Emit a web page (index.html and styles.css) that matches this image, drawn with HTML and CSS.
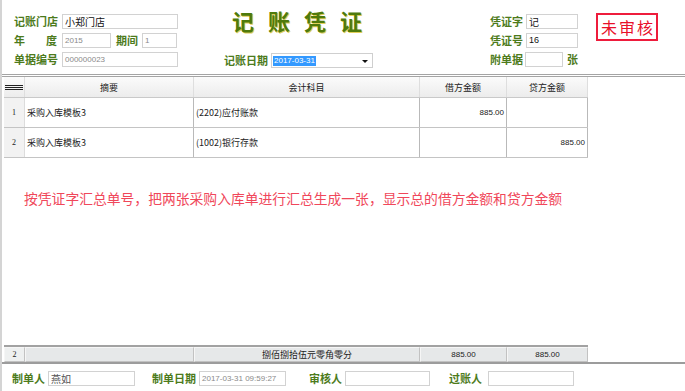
FILE: index.html
```html
<!DOCTYPE html>
<html lang="zh">
<head>
<meta charset="UTF-8">
<title>记账凭证</title>
<link rel="stylesheet" href="styles.css">
</head>
<body>
<div class="page">

<div class="head">
<div class="col-left">
<div class="row"><span class="lbl">记账门店</span><span class="field w116 dark">小郑门店</span></div>
<div class="row"><span class="lbl spread">年度</span><span class="field w49 num">2015</span><span class="lbl ml5">期间</span><span class="field w35 num">1</span></div>
<div class="row"><span class="lbl">单据编号</span><span class="field w116 num">000000023</span></div>
</div>

<div class="col-mid">
<div class="title">记账凭证</div>
<div class="row"><span class="lbl">记账日期</span><span class="select"><span class="sel-text">2017-03-31</span><span class="arrow"></span></span></div>
</div>

<div class="col-right">
<div class="row"><span class="lbl">凭证字</span><span class="field w52 dark">记</span></div>
<div class="row"><span class="lbl">凭证号</span><span class="field w52 dark num">16</span></div>
<div class="row"><span class="lbl">附单据</span><span class="field w39"></span><span class="lbl unit">张</span></div>
</div>

<div class="stamp">未审核</div>
</div>

<div class="grid">
<div class="grid-row grid-head">
<div class="cell"><svg width="18" height="5" viewBox="0 0 18 5"><rect x="0" y="0" width="18" height="1" fill="#222"/><rect x="0" y="2" width="18" height="1" fill="#222"/><rect x="0" y="4" width="18" height="1" fill="#222"/></svg></div>
<div class="cell">摘要</div>
<div class="cell">会计科目</div>
<div class="cell">借方金额</div>
<div class="cell">贷方金额</div>
</div>
<div class="grid-row grid-line">
<div class="cell no">1</div>
<div class="cell txt">采购入库模板3</div>
<div class="cell txt">(2202)应付账款</div>
<div class="cell amt">885.00</div>
<div class="cell amt"></div>
</div>
<div class="grid-row grid-line">
<div class="cell no">2</div>
<div class="cell txt">采购入库模板3</div>
<div class="cell txt">(1002)银行存款</div>
<div class="cell amt"></div>
<div class="cell amt">885.00</div>
</div>

<div class="note">按凭证字汇总单号，把两张采购入库单进行汇总生成一张，显示总的借方金额和贷方金额</div>

<div class="sum-wrap">
<div class="grid-row grid-sum">
<div class="cell">2</div>
<div class="cell"></div>
<div class="cell">捌佰捌拾伍元零角零分</div>
<div class="cell">885.00</div>
<div class="cell">885.00</div>
</div>
</div>
</div>

<div class="foot">
<span class="lbl">制单人</span><span class="field w87 gray">燕如</span>
<span class="lbl gap17">制单日期</span><span class="field w87 num">2017-03-31 09:59:27</span>
<span class="lbl gap23">审核人</span><span class="field w85"></span>
<span class="lbl gap19">过账人</span><span class="field w86"></span>
</div>

</div>
</body>
</html>
```
FILE: styles.css
```css
* {
margin: 0;
padding: 0;
box-sizing: border-box;
}
body {
font-family: "Noto Sans CJK SC", "Liberation Sans", sans-serif;
background: #fff;
width: 685px;
height: 391px;
overflow: hidden;
}
.page {
border-left: 2px solid #d4d4d4;
height: 391px;
}

/* top form */
.head {
display: flex;
height: 74px;
padding: 12px 0 0 12px;
}
.row {
display: flex;
align-items: center;
height: 19px;
}
.lbl {
font-size: 11px;
font-weight: bold;
color: #4d7b1c;
line-height: 15px;
white-space: nowrap;
}
.col-left .lbl {
width: 48px;
}
.col-left .lbl.ml5 {
width: 26px;
margin-left: 5px;
}
.spread {
text-align: justify;
text-align-last: justify;
padding-right: 5px;
}
.field {
display: inline-block;
height: 15px;
border: 1px solid #d2d2d2;
background: #fff;
font-size: 9px;
line-height: 13px;
padding-left: 2px;
color: #8a8a8a;
white-space: nowrap;
overflow: hidden;
}
.field.dark {
color: #111;
font-size: 10px;
}
.field.gray {
color: #555;
font-size: 10px;
}
.num {
font-family: "Liberation Sans", sans-serif;
font-size: 8px;
}
.field.dark.num {
font-size: 9px;
}
.w116 { width: 116px; }
.w49 { width: 49px; }
.w35 { width: 35px; }
.w52 { width: 52px; }
.w39 { width: 39px; }
.w87 { width: 87px; }
.w85 { width: 85px; }
.w86 { width: 86px; }

.col-left {
width: 167px;
flex: none;
}
.col-mid {
margin-left: 43px;
width: 149px;
flex: none;
margin-top: -4px;
}
.title {
height: 43px;
line-height: 24px;
padding-left: 8px;
font-size: 22px;
font-weight: bold;
letter-spacing: 14px;
white-space: nowrap;
color: #4f7a0c;
text-shadow: 1px 1px 0 #e2cf5a;
}
.col-mid .row .lbl {
width: 47px;
}
.select {
position: relative;
display: flex;
align-items: center;
width: 102px;
height: 15px;
border: 1px solid #cfcfcf;
padding-left: 1px;
}
.sel-text {
background: #3399ff;
color: #fff;
font-family: "Liberation Sans", sans-serif;
font-size: 8px;
line-height: 10px;
padding: 0 1px;
}
.arrow {
position: absolute;
right: 4px;
top: 6px;
border-left: 3px solid transparent;
border-right: 3px solid transparent;
border-top: 3px solid #111;
}
.col-right {
margin-left: 117px;
width: 88px;
flex: none;
}
.col-right .lbl {
width: 36px;
}
.col-right .lbl.unit {
width: auto;
margin-left: 4px;
}
.stamp {
flex: none;
margin: 1px 0 0 18px;
width: 62px;
height: 28px;
border: 2px solid #ee1c3c;
color: #e8102a;
font-size: 16px;
line-height: 24px;
text-align: center;
letter-spacing: 2px;
padding-left: 2px;
}

/* grid */
.grid {
border-top: 3px double #a4a4a4;
}
.grid-row {
display: grid;
grid-template-columns: 21px 169px 226px 87px 81px;
width: 584px;
margin-left: 2px;
}
.cell {
font-size: 9px;
color: #222;
white-space: nowrap;
overflow: hidden;
}
.grid-head {
height: 21px;
background: linear-gradient(#fbfbfb, #ececec);
border-bottom: 1px solid #c9c9c9;
}
.grid-head .cell {
display: flex;
align-items: center;
justify-content: center;
border-right: 1px solid #dedede;
}
.grid-line {
height: 30px;
border-bottom: 1px solid #c4c4c4;
}
.grid-line .cell {
display: flex;
align-items: center;
border-right: 1px solid #b9b9b9;
}
.grid-line .no {
justify-content: center;
background: #f2f2f2;
border-right: 1px solid #dcdcdc;
font-family: "Liberation Serif", serif;
font-size: 8px;
}
.grid-line .txt {
padding-left: 2px;
}
.grid-line .amt {
justify-content: flex-end;
padding-right: 2px;
font-family: "Liberation Sans", sans-serif;
font-size: 8px;
}
.note {
height: 187px;
padding: 30px 0 0 22px;
font-size: 13.8px;
color: #f0475a;
white-space: nowrap;
}
.sum-wrap {
border-bottom: 2px solid #9c9c9c;
}
.grid-sum {
height: 17px;
border-top: 2px solid #a2a2a2;
}
.grid-sum .cell {
display: flex;
align-items: center;
justify-content: center;
background: #e6e8e9;
border: 1px solid #c2c2c2;
border-top-color: #f6f6f6;
border-left-color: #f6f6f6;
font-size: 9px;
}
.grid-sum .cell:nth-child(4),
.grid-sum .cell:nth-child(5) {
font-family: "Liberation Sans", sans-serif;
font-size: 8px;
}
.grid-sum .cell:first-child {
background: #eef0f0;
font-family: "Liberation Serif", serif;
font-size: 8px;
}

/* footer */
.foot {
display: flex;
align-items: center;
height: 26px;
padding: 3px 0 0 10px;
}
.foot .lbl {
margin-right: 3px;
}
.gap17 { margin-left: 17px; }
.gap23 { margin-left: 23px; }
.gap19 { margin-left: 19px; }
.foot .lbl.gap19 {
margin-right: 6px;
}
```
